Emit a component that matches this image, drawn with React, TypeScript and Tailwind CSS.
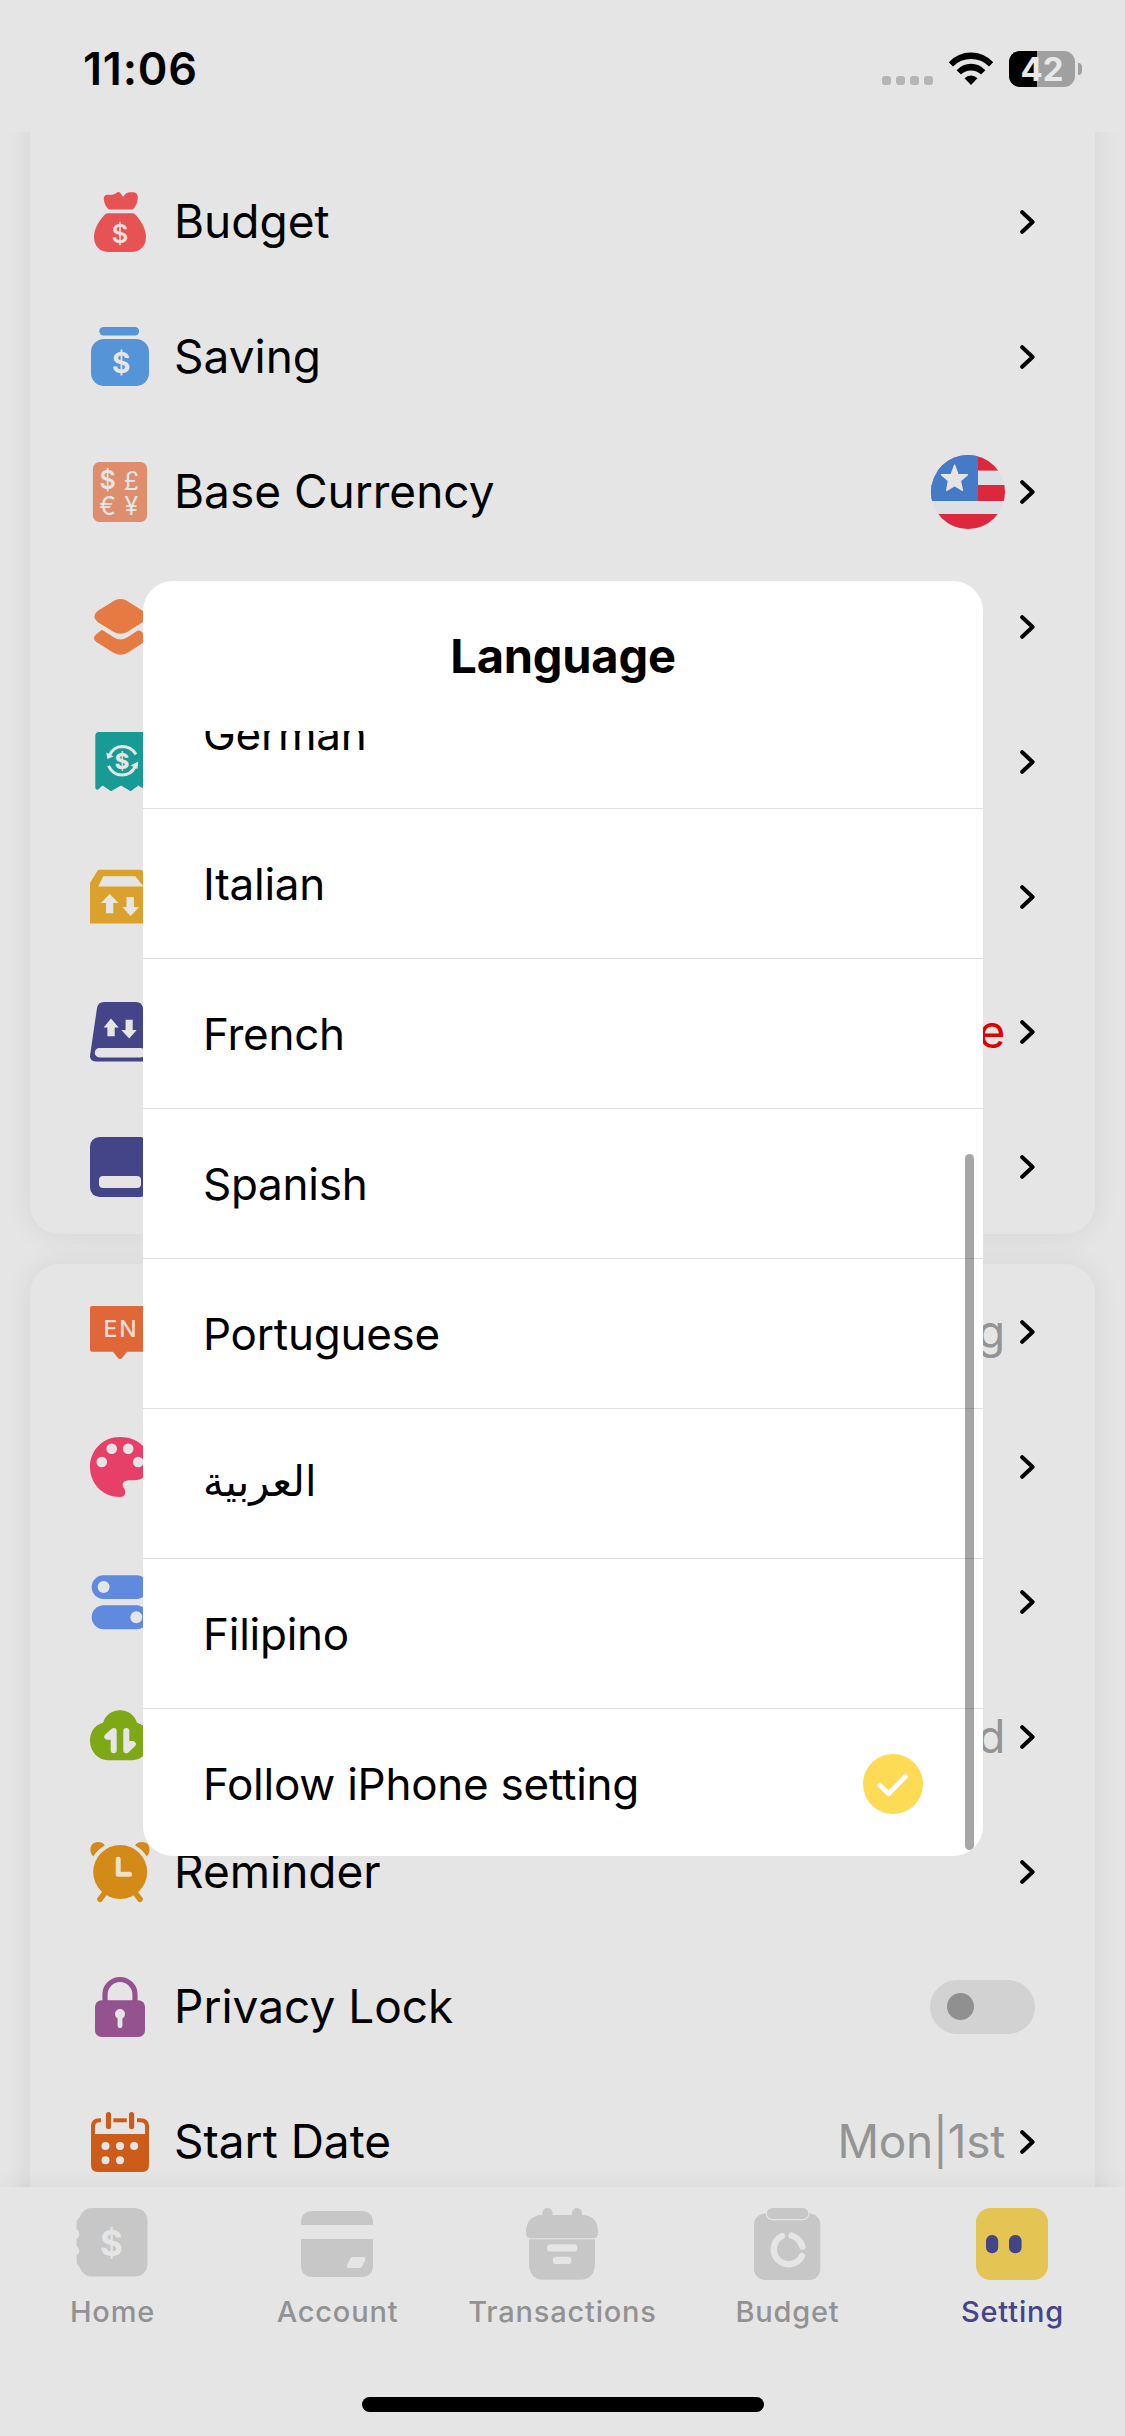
/**
 * SETTINGS SCREEN
 * Settings list with the language picker open on top
 */

import React from 'react';

interface SettingItem {
  label: string;
  icon: React.ReactNode;
  value?: string;
  valueClass?: string;
  flag?: boolean;
  toggle?: boolean;
}

const PAPER = '#e5e5e5';

const Icon: React.FC<{ children: React.ReactNode }> = ({ children }) => (
  <svg viewBox="0 0 60 60" className="w-[60px] h-[60px] shrink-0 overflow-visible">
    {children}
  </svg>
);

/* ---------- Row icons ---------- */

const BudgetIcon = () => (
  <Icon>
    <g fill="#e55354">
      <path d="M13.8 7C13.5 4 15.5 2.2 18.5 2.8C22 3.3 24.5 2.6 26.5 .8C28.5 -.6 30 .2 31 2L33.2 4.8L35.6 1.8C37.5 .2 40.5 .2 43.5 .3C46.5 .5 48 3 47.8 6C47.5 10.5 46 14.5 42.8 17.5H18.8C15.5 14.8 14.2 11 13.8 7Z" />
      <path d="M18 21.2H42.5C44.2 21.2 45 22 46.5 23.8C51.5 29.5 56 37.5 56 45C56 54 50 60 41 60H19C10 60 4 54 4 45C4 37.5 8.5 29.5 13.7 23.8C15.2 22 16.2 21.2 18 21.2Z" />
    </g>
    <text x="30" y="51" textAnchor="middle" fontSize="26" fontWeight="600" fill="#f3dcdc">$</text>
  </Icon>
);

const SavingIcon = () => (
  <Icon>
    <rect x="9.3" y="0" width="39.8" height="8.4" rx="4.2" fill="#5594d6" />
    <rect x="1" y="12" width="58" height="47" rx="13" fill="#5594d6" />
    <text x="31.2" y="45.5" textAnchor="middle" fontSize="28" fontWeight="700" fill={PAPER}>$</text>
  </Icon>
);

const CurrencyIcon = () => (
  <Icon>
    <rect x="2.9" y="0" width="54.2" height="60" rx="6.5" fill="#de8e6c" />
    <g fill={PAPER} textAnchor="middle" fontSize="25">
      <text x="17.6" y="26.500" fontWeight="600">$</text>
      <text x="41.4" y="27.5">£</text>
      <text x="17.6" y="53">€</text>
      <text x="41.4" y="53">¥</text>
    </g>
  </Icon>
);

const CategoryIcon = () => (
  <Icon>
    <g fill="#e57a42">
      <path d="M25 3.2Q30.5 .6 36 3.2L53 14Q59 19.5 53 25L38 34.6Q30.5 39 23 34.6L7.5 25Q1.5 19.5 7.5 14Z" />
      <path d="M11.5 33Q12.5 33 14 34L24 40.5Q30.5 44.5 37 40.5L47 34Q49 33 51 34.3L54.5 37.5Q58.5 41 54.5 45L38 55.5Q30.5 60 23 55.5L6 44.8Q2 41 6 37.5Z" />
    </g>
  </Icon>
);

const RecurringIcon = () => (
  <Icon>
    <path d="M5.3 4Q5.3 0 9 0H53Q56.5 0 56.5 4V58.5L48.3 53.4L40.7 59.3L31 53.4L21 59.3L12.7 53.4L8 57.5Q5.3 58.5 5.3 55Z" fill="#179b94" />
    <g fill="none" stroke={PAPER} strokeWidth="3">
      <path d="M19.5 23.5Q23.5 14.8 32 14.6Q41 14.6 46 22.4" />
      <path d="M18.5 33.8Q23 43 32 43Q41 43 45 35" />
    </g>
    <path d="M16.3 20.5L17.3 27L23.5 24.5ZM48.3 29.5L40.5 33.5L47.5 37Z" fill={PAPER} />
    <text x="32" y="36.5" textAnchor="middle" fontSize="22" fontWeight="800" fill={PAPER}>$</text>
  </Icon>
);

const ImportIcon = () => (
  <Icon>
    <path d="M0 16L7.3 4Q8 2.8 9.5 2.8H50.5Q52 2.8 52.7 4L60 16V56.4H0Z" fill="#daa22d" />
    <g fill={PAPER}>
      <path d="M13.3 9.2H45.3L53.5 19.4H8.3Z" />
      <path d="M19.7 27L28.5 36H23.3V46.2H16V36H11Z" />
      <path d="M40.6 49L32.2 40H36.5V30H43.9V40H49.2Z" />
    </g>
  </Icon>
);

const BackupIcon = () => (
  <Icon>
    <path d="M14 0H46Q52 0 53 6L60 54Q60 59.4 54.5 59.4H5.5Q0 59.4 0 54L7 6Q8 0 14 0Z" fill="#444488" />
    <g fill={PAPER}>
      <rect x="4.7" y="46" width="50.6" height="9.4" rx="4.7" />
      <path d="M21 16.5L28.7 25.4H24.7V34.3H17.4V25.4H13.6Z" />
      <path d="M39.2 36.6L31.3 28H35.6V17.8H42.7V28H46.7Z" />
    </g>
  </Icon>
);

const WidgetIcon = () => (
  <Icon>
    <rect width="60" height="60" rx="9.5" fill="#444488" />
    <rect x="9" y="39" width="42" height="12" rx="4" fill={PAPER} />
  </Icon>
);

const LanguageIcon = () => (
  <Icon>
    <path d="M2 3.9H58Q60 3.9 60 6V47.8Q60 49.8 58 49.8H37L32.3 55.8Q30 58.2 27.7 55.8L23 49.8H2Q0 49.8 0 47.8V6Q0 3.9 2 3.9Z" fill="#e06738" />
    <text x="31" y="34.8" textAnchor="middle" fontSize="23" fontWeight="500" letterSpacing="1.8" fill="#f0dcd4">EN</text>
  </Icon>
);

const ThemeIcon = () => (
  <Icon>
    <path d="M30 0C47 0 60 11 60 27C60 37 53 43.3 44 43.3H38.5C34 43.3 31 47 33.5 50.5C37 55 35 60 30 60C13 60 0 47 0 30C0 13 13 0 30 0Z" fill="#e63f68" />
    <g fill={PAPER}>
      <circle cx="21.7" cy="11.8" r="5.3" />
      <circle cx="38.2" cy="11.8" r="5.3" />
      <circle cx="11.8" cy="25" r="5.3" />
      <circle cx="48.2" cy="25" r="5.3" />
    </g>
  </Icon>
);

const GeneralIcon = () => (
  <Icon>
    <rect x="1.7" y="3.2" width="56.6" height="23.7" rx="11.8" fill="#5f8ade" />
    <rect x="1.7" y="33.2" width="56.6" height="24" rx="12" fill="#5f8ade" />
    <circle cx="13.6" cy="15" r="6" fill={PAPER} />
    <circle cx="46.3" cy="45.2" r="6" fill={PAPER} />
  </Icon>
);

const CloudIcon = () => (
  <Icon>
    <path d="M30 3.2C38.5 3.2 45 8.5 47 15.8C54.5 17.5 60 24.5 60 33.5C60 44.5 52 53.2 42 53.2H18C8 53.2 0 44.5 0 33.5C0 24.5 5.5 17.5 13 15.8C15 8.5 21.5 3.2 30 3.2Z" fill="#7fa817" />
    <g stroke={PAPER} strokeWidth="6" strokeLinecap="round" strokeLinejoin="round" fill={PAPER}>
      <path d="M23.7 43.3V24L17.3 29.8L23.7 29.8" />
      <path d="M36.3 24V43.3L42.8 37L36.3 37" />
    </g>
  </Icon>
);

const ReminderIcon = () => (
  <Icon>
    <g fill="#d48a17">
      <path d="M3.2 14.5C-1.5 9.5 -.5 0 8 0C11.5 0 14 1.5 14.8 3.4C10 6 6 9.8 3.2 14.5Z" />
      <path d="M56.8 14.5C61.5 9.5 60.5 0 52 0C48.5 0 46 1.5 45.2 3.4C50 6 54 9.8 56.8 14.5Z" />
      <circle cx="30.2" cy="30" r="27" />
    </g>
    <path d="M14 52L10 57.2M46 52L50 57.2" stroke="#d48a17" strokeWidth="5.6" strokeLinecap="round" />
    <path d="M28.2 17.2V32.2H39.6" fill="none" stroke="#f0e0c6" strokeWidth="5" strokeLinecap="round" strokeLinejoin="round" />
  </Icon>
);

const LockIcon = () => (
  <Icon>
    <path d="M15 26V17.5A15 15 0 0 1 45 17.5V26" fill="none" stroke="#94528f" strokeWidth="5.2" />
    <rect x="5" y="23.3" width="50" height="36.7" rx="6.5" fill="#94528f" />
    <circle cx="30" cy="37" r="5" fill={PAPER} />
    <path d="M30 38V48.8" stroke={PAPER} strokeWidth="4.8" strokeLinecap="round" />
  </Icon>
);

const StartDateIcon = () => (
  <Icon>
    <path d="M11 8.3H9.5Q3 8.3 3 14.5V24H57V14.5Q57 8.3 50.5 8.3H47" fill="none" stroke="#cb5c19" strokeWidth="4" />
    <path d="M23.4 8.3H36.8" stroke="#cb5c19" strokeWidth="4" />
    <path d="M18.5 2.6V14.4M41.6 2.6V14.4" stroke="#cb5c19" strokeWidth="5.2" strokeLinecap="round" />
    <path d="M1 22H59V53Q59 60 52.5 60H7.5Q1 60 1 53Z" fill="#cb5c19" />
    <g fill={PAPER}>
      <circle cx="15.5" cy="34" r="4" />
      <circle cx="30" cy="34" r="4" />
      <circle cx="44.1" cy="34" r="4" />
      <circle cx="15.5" cy="48.2" r="4" />
      <circle cx="30" cy="48.2" r="4" />
    </g>
  </Icon>
);

const Chevron = () => (
  <svg viewBox="0 0 15 24" className="w-[15px] h-6 shrink-0">
    <path d="M2.2 2.2L12.6 12L2.2 21.8" fill="none" stroke="#000" strokeWidth="4" strokeLinecap="round" strokeLinejoin="round" />
  </svg>
);

const UsFlag = () => (
  <svg viewBox="0 0 74 74" className="w-[74px] h-[74px] shrink-0">
    <clipPath id="flag-clip">
      <circle cx="37" cy="37" r="37" />
    </clipPath>
    <g clipPath="url(#flag-clip)">
      <rect width="74" height="74" fill="#dcdfe4" />
      <rect width="74" height="15.6" fill="#db283d" />
      <rect y="30" width="74" height="16" fill="#db283d" />
      <rect y="59" width="74" height="15" fill="#db283d" />
      <rect width="47" height="46" fill="#457ac6" />
    </g>
    <path
      d="M23.6 10L27 19.3L36.6 19.7L29.5 25.7L31.5 35.5L23.6 30.7L15.7 35.5L17.3 25.7L10.4 19.7L20.2 19.3Z"
      fill={PAPER}
      stroke={PAPER}
      strokeWidth="1.2"
      strokeLinejoin="round"
    />
  </svg>
);

/* ---------- Tab icons ---------- */

const TabIcon: React.FC<{ children: React.ReactNode }> = ({ children }) => (
  <svg viewBox="0 0 72 72" className="mr-px w-[72px] h-[72px] overflow-visible">
    {children}
  </svg>
);

const HomeTabIcon = () => (
  <TabIcon>
    <path d="M16 0H57Q71.5 0 71.5 14V54.5Q71.5 68.5 57 68.5H16Q7 68.5 3.5 59Q.6 57 .6 52V47Q3.4 45.5 3.4 42.5Q3.4 40 .6 38V31Q3.4 28.5 3.4 26Q3.4 23 .6 21V15Q.6 11 3.5 9.5Q7 0 16 0Z" fill="#c7c7c7" />
    <text x="35.5" y="47.5" textAnchor="middle" fontSize="35" fontWeight="700" fill={PAPER}>$</text>
  </TabIcon>
);

const AccountTabIcon = () => (
  <TabIcon>
    <path d="M0 17V15Q0 3 12 3H60Q72 3 72 15V17ZM0 31H72V57Q72 69 60 69H12Q0 69 0 57Z" fill="#c7c7c7" />
    <path d="M52 49H62Q65.5 49 64.3 51.8L61.3 58Q60.5 60 58 60H48Q45 60 46 57.5L49 51Q49.8 49 52 49Z" fill={PAPER} />
  </TabIcon>
);

const TransactionsTabIcon = () => (
  <TabIcon>
    <g fill="#c7c7c7">
      <rect x="16.5" y="0" width="10" height="14" rx="5" />
      <rect x="46" y="0" width="10" height="14" rx="5" />
      <path d="M15 7H57.5Q72 8.5 72 24Q72 30.2 68 30.2H4.5Q0 30.2 0 24Q0 8.5 15 7Z" />
      <path d="M3 31.3H69V55Q69 71.7 54 71.7H18Q3 71.7 3 55Z" />
    </g>
    <rect x="21" y="36.3" width="30.5" height="7.2" rx="3.6" fill={PAPER} />
    <rect x="26.8" y="48.8" width="18.6" height="7.2" rx="3.6" fill={PAPER} />
  </TabIcon>
);

const BudgetTabIcon = () => (
  <TabIcon>
    <rect x="3" y="5.5" width="66.3" height="66.5" rx="11" fill="#c7c7c7" />
    <rect x="14.8" y="-1.2" width="43.6" height="13.4" rx="6.5" fill={PAPER} />
    <rect x="16" y="0" width="41.3" height="11" rx="5.5" fill="#c7c7c7" />
    <g fill="none" stroke={PAPER} strokeWidth="6.4" strokeLinecap="round">
      <path d="M31 28A14.900 14.900 0 1 0 51 48" />
      <path d="M40.5 27.500Q48.500 30 51.500 38.500" />
    </g>
  </TabIcon>
);

const SettingTabIcon = () => (
  <TabIcon>
    <rect width="72" height="72" rx="14.5" fill="#e4c452" />
    <rect x="10" y="27" width="12.2" height="18.2" rx="6" fill="#444488" />
    <rect x="33" y="27" width="12.6" height="18.2" rx="6" fill="#444488" />
  </TabIcon>
);

/* ---------- Data ---------- */

const mainItems: SettingItem[] = [
  { label: 'Budget', icon: <BudgetIcon /> },
  { label: 'Saving', icon: <SavingIcon /> },
  { label: 'Base Currency', icon: <CurrencyIcon />, flag: true },
  { label: 'Category', icon: <CategoryIcon /> },
  { label: 'Recurring', icon: <RecurringIcon /> },
  { label: 'Import/Export', icon: <ImportIcon /> },
  { label: 'Backup', icon: <BackupIcon />, value: 'None', valueClass: 'text-[#e00000]' },
  { label: 'Widget', icon: <WidgetIcon /> },
];

const appItems: SettingItem[] = [
  { label: 'Language', icon: <LanguageIcon />, value: 'Follow iPhone setting' },
  { label: 'Theme', icon: <ThemeIcon /> },
  { label: 'General', icon: <GeneralIcon /> },
  { label: 'iCloud', icon: <CloudIcon />, value: 'Disabled' },
  { label: 'Reminder', icon: <ReminderIcon /> },
  { label: 'Privacy Lock', icon: <LockIcon />, toggle: true },
  { label: 'Start Date', icon: <StartDateIcon />, value: 'Mon|1st' },
];

const languages = [
  { name: 'German' },
  { name: 'Italian' },
  { name: 'French' },
  { name: 'Spanish' },
  { name: 'Portuguese' },
  { name: 'العربية', className: 'text-[41.5px] pb-1' },
  { name: 'Filipino' },
  { name: 'Follow iPhone setting' },
];

const tabs = [
  { label: 'Home', icon: <HomeTabIcon /> },
  { label: 'Account', icon: <AccountTabIcon /> },
  { label: 'Transactions', icon: <TransactionsTabIcon /> },
  { label: 'Budget', icon: <BudgetTabIcon /> },
  { label: 'Setting', icon: <SettingTabIcon /> },
];

const selectedLanguage = 'Follow iPhone setting';
const activeTab = 'Setting';

/* ---------- Sections ---------- */

const StatusBar = () => (
  <header className="flex h-[132px] shrink-0 items-start justify-between pt-[51px] pr-[43px] pl-[83px]">
    <span className="text-[45px] leading-9 font-semibold tracking-[0.8px]">11:06</span>
    <div className="flex h-9 items-center">
      <div className="mt-[23px] flex gap-[5px]">
        {[0, 1, 2, 3].map((dot) => (
          <span key={dot} className="size-[9px] rounded-[3px] bg-[#b5b5b5]" />
        ))}
      </div>
      <svg viewBox="0 0 46 34" className="ml-[15px] h-[34px] w-[46px]">
        <path d="M.8 10.2Q10 .5 23 .5Q36 .5 45.2 10.2L41 14.4Q33.5 7 23 7Q12.5 7 5 14.4Z" />
        <path d="M8.6 18.2Q14.8 11.8 23 11.8Q31.2 11.8 37.4 18.2L33 22.6Q28.7 18.4 23 18.4Q17.3 18.4 13 22.6Z" />
        <path d="M16.5 26.2Q19.3 23.4 23 23.4Q26.7 23.4 29.5 26.2L23 33Z" />
      </svg>
      <div className="relative ml-[15px] flex h-9 w-[66px] items-center justify-center overflow-hidden rounded-[11px] bg-[#a0a0a0]">
        <div className="absolute inset-y-0 left-0 w-7 bg-black" />
        <span className="relative text-[33px] leading-9 font-bold text-[#e8e8e8]">42</span>
      </div>
      <span className="ml-[3px] h-3 w-1 rounded-r-full bg-[#a0a0a0]" />
    </div>
  </header>
);

const SettingRow: React.FC<{ item: SettingItem }> = ({ item }) => (
  <div className="flex h-[135px] items-center pr-[60px] pl-[60px]">
    {item.icon}
    <span className="ml-6 text-[46px] whitespace-nowrap">{item.label}</span>
    <div className="ml-auto flex items-center gap-[15px]">
      {item.value && (
        <span className={`text-[46px] tracking-[-0.3px] whitespace-nowrap ${item.valueClass ?? 'text-[#949494]'}`}>
          {item.value}
        </span>
      )}
      {item.flag && <UsFlag />}
      {item.toggle ? (
        <div className="flex h-[54px] w-[105px] items-center rounded-full bg-[#d2d2d2] pl-[17px]">
          <span className="size-[27px] rounded-full bg-[#909090]" />
        </div>
      ) : (
        <Chevron />
      )}
    </div>
  </div>
);

const TabBar = () => (
  <nav className="relative flex h-[249px] shrink-0 flex-col items-center bg-[#e5e5e5] shadow-[0_0_24px_rgba(0,0,0,0.06)]">
    <div className="grid w-full grid-cols-5 pt-[21px]">
      {tabs.map((tab) => (
        <div key={tab.label} className="flex flex-col items-center">
          {tab.icon}
          <span
            className={`mt-3 text-[29px] leading-10 font-medium tracking-[0.8px] ${
              tab.label === activeTab ? 'text-[#444488]' : 'text-[#929292]'
            }`}
          >
            {tab.label}
          </span>
        </div>
      ))}
    </div>
    <div className="mt-auto mb-6 h-[15px] w-[402px] rounded-full bg-black" />
  </nav>
);

const LanguageDialog = () => (
  <div className="absolute top-[581px] left-[143px] flex h-[1275px] w-[840px] flex-col overflow-hidden rounded-[30px] bg-white">
    <h2 className="flex h-[150px] shrink-0 items-center justify-center text-[47px] font-bold tracking-[-0.2px]">
      Language
    </h2>
    <div className="relative min-h-0 flex-1 overflow-hidden">
      <ul className="-mt-[72px]">
        {languages.map((language) => (
          <li
            key={language.name}
            className="flex h-[150px] items-center justify-between border-b border-[#dfdfdf] pr-[60px] pl-[60px] last:border-transparent"
          >
            <span className={language.className ?? 'text-[44px] tracking-[-0.25px]'}>{language.name}</span>
            {language.name === selectedLanguage && (
              <svg viewBox="0 0 60 60" className="size-[60px]">
                <circle cx="30" cy="30" r="30" fill="#fddb55" />
                <path d="M17 31.5L25.8 39.7L42.5 22.5" fill="none" stroke="#fff" strokeWidth="4.8" strokeLinecap="round" strokeLinejoin="round" />
              </svg>
            )}
          </li>
        ))}
      </ul>
      <div className="absolute top-[423px] right-[9px] h-[696px] w-[9px] rounded-full bg-black/35" />
    </div>
  </div>
);

export default function App() {
  return (
    <div className="relative flex h-[2436px] w-[1125px] flex-col overflow-hidden bg-[#e5e5e5] font-['Inter','DejaVu_Sans',sans-serif] text-black">
      <StatusBar />

      {/* Settings list */}
      <main className="min-h-0 flex-1 overflow-hidden px-[30px]">
        <section className="-mt-10 rounded-[30px] bg-[#e5e5e5] pt-[62px] shadow-[0_0_30px_rgba(0,0,0,0.07)]">
          {mainItems.map((item) => (
            <SettingRow key={item.label} item={item} />
          ))}
        </section>
        <section className="mt-[30px] rounded-[30px] bg-[#e5e5e5] pb-10 shadow-[0_0_30px_rgba(0,0,0,0.07)]">
          {appItems.map((item) => (
            <SettingRow key={item.label} item={item} />
          ))}
        </section>
      </main>

      <TabBar />
      <LanguageDialog />
    </div>
  );
}
